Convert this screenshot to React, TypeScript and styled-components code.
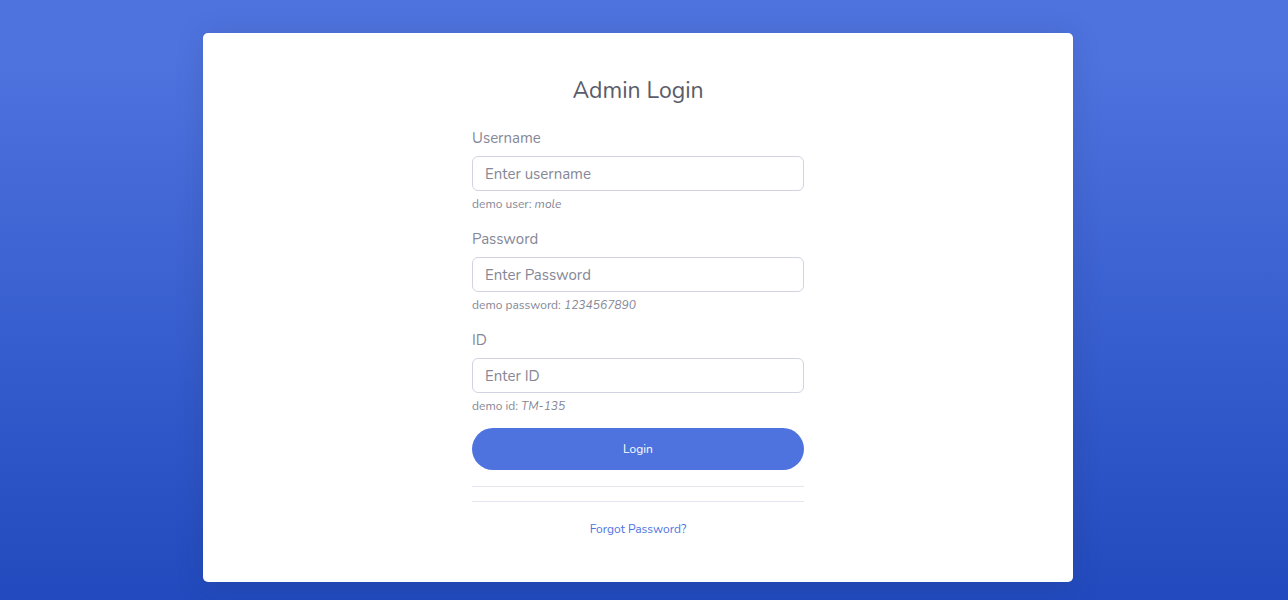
import styled, { createGlobalStyle } from 'styled-components';

const GlobalStyle = createGlobalStyle`
  html, body {
    margin: 0;
    padding: 0;
  }
  body {
    font-family: 'Nunito', 'Lato', 'Noto Sans', sans-serif;
  }
  * {
    box-sizing: border-box;
  }
`;

const campos = [
  { id: 'username', rotulo: 'Username', placeholder: 'Enter username', dica: 'demo user:', valor: 'mole', tipo: 'text' },
  { id: 'password', rotulo: 'Password', placeholder: 'Enter Password', dica: 'demo password:', valor: '1234567890', tipo: 'password' },
  { id: 'id', rotulo: 'ID', placeholder: 'Enter ID', dica: 'demo id:', valor: 'TM-135', tipo: 'text' },
];

export default function App() {
  function onSubmit(event: React.FormEvent<HTMLFormElement>) {
    event.preventDefault();
  }

  return (
    <>
      <GlobalStyle />
      <Pagina>
        <Cartao>
          <Titulo>Admin Login</Titulo>
          <Formulario onSubmit={onSubmit}>
            {campos.map((campo) => (
              <Grupo key={campo.id}>
                <Rotulo htmlFor={campo.id}>{campo.rotulo}</Rotulo>
                <Entrada id={campo.id} type={campo.tipo} placeholder={campo.placeholder} />
                <Dica>
                  {campo.dica} <em>{campo.valor}</em>
                </Dica>
              </Grupo>
            ))}
            <BotaoLogin type='submit'>Login</BotaoLogin>
            <Linha $espaco={16} />
            <Linha $espaco={14} />
            <LinkEsqueci href='#'>Forgot Password?</LinkEsqueci>
          </Formulario>
        </Cartao>
      </Pagina>
    </>
  );
}

const Pagina = styled.div`
  width: 100%;
  min-height: 600px;
  background: linear-gradient(180deg, #4e73df 10%, #224abe 100%);
  display: flex;
  justify-content: center;
  padding-top: 33px;
  padding-bottom: 18px;
  padding-right: 12px;
`;

const Cartao = styled.div`
  width: 870px;
  height: 549px;
  background: #fff;
  border-radius: 5px;
  box-shadow: 0 0.15rem 1.75rem 0 rgba(33, 40, 50, 0.15);
  display: flex;
  flex-direction: column;
  align-items: center;
  padding-top: 45px;
`;

const Titulo = styled.h1`
  margin: 0 0 24px;
  font-size: 23px;
  font-weight: 400;
  line-height: 26px;
  color: #5a5c69;
`;

const Formulario = styled.form`
  width: 332px;
  display: flex;
  flex-direction: column;
`;

const Grupo = styled.div`
  display: flex;
  flex-direction: column;
  margin-bottom: 18px;

  &:nth-of-type(3) {
    margin-bottom: 15px;
  }
`;

const Rotulo = styled.label`
  font-size: 15px;
  line-height: 20px;
  color: #858796;
  margin-bottom: 8px;
`;

const Entrada = styled.input`
  height: 35px;
  width: 100%;
  padding: 0 12px;
  border: 1px solid #d1d3e2;
  border-radius: 6px;
  font-family: inherit;
  font-size: 15px;
  color: #6e707e;

  &::placeholder {
    color: #858796;
  }

  &:focus {
    outline: none;
  }
`;

const Dica = styled.small`
  margin-top: 6px;
  font-size: 12px;
  line-height: 14px;
  color: #858796;

  em {
    font-style: italic;
  }
`;

const BotaoLogin = styled.button`
  height: 42px;
  width: 100%;
  border: none;
  border-radius: 21px;
  background: #4e73df;
  color: #fff;
  font-family: inherit;
  font-size: 12px;
  cursor: pointer;
`;

const Linha = styled.hr<{ $espaco: number }>`
  margin: ${({ $espaco }) => $espaco}px 0 0;
  border: 0;
  border-top: 1px solid #e3e6f0;
`;

const LinkEsqueci = styled.a`
  margin-top: 20px;
  text-align: center;
  font-size: 12px;
  line-height: 14px;
  color: #4e73df;
  text-decoration: none;
`;
